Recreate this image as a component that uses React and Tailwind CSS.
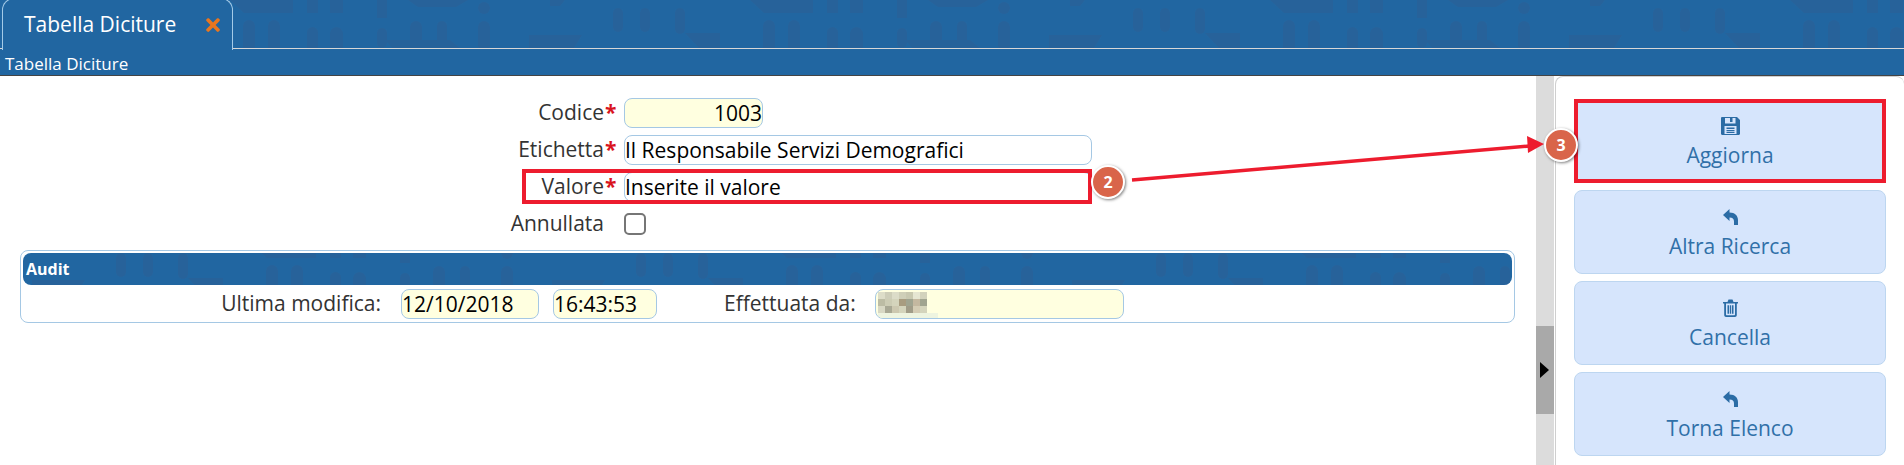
import { FaTimes } from "react-icons/fa";

const font = "font-['Open_Sans',sans-serif]";

const mosaic = [
  "bg-[#ddddc8]", "bg-[#cdcdb8]", "bg-[#dcdcc8]", "bg-[#cfcfb8]", "bg-[#c8c8b0]", "bg-[#e6e6d2]", "bg-[#d2d2bc]",
  "bg-[#bcbca4]", "bg-[#ccccb4]", "bg-[#d4d4bc]", "bg-[#a89c80]", "bg-[#a0a490]", "bg-[#c4b8a0]", "bg-[#a0a490]",
  "bg-[#d8d8c4]", "bg-[#a8a894]", "bg-[#ccc8b0]", "bg-[#d4d4bc]", "bg-[#a09c88]", "bg-[#d4ccb4]", "bg-[#d4d4bc]",
];

function Arch({ x, y, w, h }) {
  return <rect x={x} y={y} width={w} height={h} rx={w / 2} />;
}

// faint repeating building pattern behind the blue bars
function Pattern({ id, dy = 0 }) {
  return (
    <svg className="absolute inset-0 w-full h-full" aria-hidden="true">
      <defs>
        <pattern id={id} x="-18" y={dy} width="520" height="48" patternUnits="userSpaceOnUse">
          <g fill="#2a5f95" opacity="0.6">
            <path d="M248 0H311V13H262Z" />
            <Arch x={261} y={20} w={12} h={34} />
            <Arch x={286} y={20} w={12} h={34} />
            <rect x={325} y={0} width={11} height={13} />
            <rect x={348} y={0} width={13} height={13} />
            <Arch x={325} y={27} w={11} h={28} />
            <Arch x={348} y={27} w={13} h={28} />
            <rect x={395} y={0} width={10} height={18} />
            <Arch x={395} y={28} w={10} h={20} />
            <path d="M426 0H486L474 7H436Z" />
            <Arch x={428} y={21} w={12} h={24} />
            <Arch x={455} y={21} w={10} h={24} />
            <path d="M410 48L403 40H468L478 48Z" />
            <circle cx={502} cy={8} r={6} />
            <Arch x={496} y={21} w={12} h={30} />
            <path d="M27 35H80L72 48H27Z" />
            <path d="M48 0H63L58 6H48Z" />
            <Arch x={111} y={8} w={10} h={24} />
            <Arch x={138} y={8} w={10} h={24} />
            <Arch x={173} y={8} w={10} h={26} />
            <path d="M183 33H218V48H197Z" />
          </g>
        </pattern>
      </defs>
      <rect width="100%" height="100%" fill={`url(#${id})`} />
    </svg>
  );
}

function SaveIcon() {
  return (
    <svg width="19" height="18" viewBox="0 0 19 18" fill="#2b6ca5" aria-hidden="true">
      <path d="M0 1.2C0 .5.5 0 1.2 0H16L19 3V16.8C19 17.5 18.5 18 17.8 18H1.2C.5 18 0 17.5 0 16.8ZM4 1V6.5H14.5V1H11.5V5H9V1ZM3.5 9V17H15.5V9ZM5.5 10.5H13.5V12H5.5ZM5.5 13H13.5V14.2H5.5ZM5.5 15H13.5V16H5.5Z" fillRule="evenodd" />
    </svg>
  );
}

function ReplyIcon() {
  return (
    <svg width="15" height="16" viewBox="0 0 15 16" fill="#2b6ca5" aria-hidden="true">
      <path d="M0 6L6.5 0V3.5C12 3.5 15 7 15 11V16H11V12.5C11 10 9.5 8.5 6.5 8.5V12Z" />
    </svg>
  );
}

function TrashIcon() {
  return (
    <svg width="15" height="18" viewBox="0 0 15 18" fill="#2b6ca5" aria-hidden="true">
      <path d="M0 3H4.5L5.5 .5H9.5L10.5 3H15V4.6H13.8V16C13.8 17.2 13 18 12 18H3C2 18 1.2 17.2 1.2 16V4.6H0ZM3 4.6V15.6C3 16 3.2 16.3 3.6 16.3H11.4C11.8 16.3 12 16 12 15.6V4.6ZM4.5 6.2H6V14.8H4.5ZM6.8 6.2H8.2V14.8H6.8ZM9 6.2H10.5V14.8H9Z" fillRule="evenodd" />
    </svg>
  );
}

function ActionButton({ icon, label, marked }) {
  return (
    <button
      className={`h-[84px] flex flex-col items-center justify-center gap-[7px] pt-[4px] rounded-lg bg-[#d6e5fc] text-[21px] leading-[27px] text-[#3070a8] ${
        marked ? "rounded-none border-4 border-[#ed1c2e]" : "border border-[#bdd6f0]"
      }`}
    >
      <span className="h-[18px] flex items-center">{icon}</span>
      {label}
    </button>
  );
}

function Field({ className = "", children }) {
  return (
    <div className={`h-[30px] rounded-lg border border-[#a5c8e4] text-[21px] leading-[28px] text-black whitespace-nowrap overflow-hidden ${className}`}>
      {children}
    </div>
  );
}

function Row({ label, required, children }) {
  return (
    <div className="flex items-center h-[30px] text-[21px] text-[#333]">
      <span className="w-[604px] text-right whitespace-nowrap">{label}</span>
      <span className="w-[20px] pl-[1px] text-[#d9141e] font-bold">{required ? "*" : ""}</span>
      {children}
    </div>
  );
}

export default function App() {
  return (
    <div className={`relative h-[465px] w-[1904px] overflow-hidden flex flex-col bg-[#2166a1] ${font}`}>
      <div className="relative h-[49px] shrink-0">
        <div className="absolute left-0 top-0 right-0 h-[49px] border-b border-[#d7d7d7]">
          <Pattern id="topbar" />
        </div>
        <div className="absolute left-[2px] top-[-2px] w-[231px] h-[52px] bg-[#2166a1] rounded-t-[12px] border border-b-0 border-[#a4cbe8] flex items-center pl-[21px] text-[21px] text-white">
          Tabella Diciture
          <FaTimes className="ml-[27px] text-[#e8761f]" size={20} />
        </div>
      </div>
      <div className="h-[27px] shrink-0 border-b border-[#444] pl-[5px] text-[17px] leading-[30px] text-white">
        Tabella Diciture
      </div>

      <div className="flex-1 flex bg-white">
        <div className="w-[1536px] rounded-t-lg bg-white pt-[22px] px-[20px]">
          <div className="flex flex-col gap-[7px] -ml-[20px]">
            <Row label="Codice" required>
              <Field className="w-[139px] bg-[#ffffe0] text-right">1003</Field>
            </Row>
            <Row label="Etichetta" required>
              <Field className="w-[468px]">Il Responsabile Servizi Demografici</Field>
            </Row>
            <Row label="Valore" required>
              <Field className="w-[468px]">Inserite il valore</Field>
            </Row>
            <Row label="Annullata">
              <span className="w-[22px] h-[22px] rounded-[5px] border-2 border-[#767676] bg-white" />
            </Row>
          </div>

          <div className="mt-[11px] w-[1495px] h-[73px] rounded-lg border border-[#a5c8e4] p-[2px]">
            <div className="relative h-[32px] rounded-lg bg-[#2166a1] overflow-hidden">
              <Pattern id="auditbar" dy={-8} />
              <span className="relative pl-[3px] text-[16px] leading-[32px] font-bold text-white">Audit</span>
            </div>
            <div className="flex items-center mt-[4px] h-[30px] text-[21px] text-[#333]">
              <span className="w-[358px] text-right whitespace-nowrap">Ultima modifica:</span>
              <Field className="ml-[20px] w-[138px] bg-[#ffffe0]">12/10/2018</Field>
              <Field className="ml-[14px] w-[104px] bg-[#ffffe0]">16:43:53</Field>
              <span className="ml-[67px] w-[132px] whitespace-nowrap">Effettuata da:</span>
              <Field className="ml-[19px] w-[249px] bg-[#ffffe0] pl-[2px] pt-[2px]">
                <div className="grid grid-cols-[repeat(7,7px)] auto-rows-[7px] w-[49px]">
                  {mosaic.map((c, i) => (
                    <div key={i} className={c} />
                  ))}
                </div>
                <div className="h-[5px] w-[60px] bg-[#eef4e0]" />
              </Field>
            </div>
          </div>
        </div>

        <div className="relative w-[18px] bg-[#dcdcdc]">
          <div className="absolute left-0 top-[250px] w-[18px] h-[88px] bg-[#a9a9a9] flex items-center pl-[4px]">
            <span className="w-0 h-0 border-y-[8px] border-y-transparent border-l-[9px] border-l-black" />
          </div>
        </div>

        <div className="ml-[1px] flex-1 rounded-tr-lg rounded-tl-lg border-l border-t border-[#cfcfcf] pt-[22px] pl-[18px] pr-[18px]">
          <div className="flex flex-col gap-[7px]">
            <ActionButton icon={<SaveIcon />} label="Aggiorna" marked />
            <ActionButton icon={<ReplyIcon />} label="Altra Ricerca" />
            <ActionButton icon={<TrashIcon />} label="Cancella" />
            <ActionButton icon={<ReplyIcon />} label="Torna Elenco" />
          </div>
        </div>
      </div>

      {/* annotations drawn over the screen */}
      <div className="absolute left-[522px] top-[169px] w-[570px] h-[35px] border-4 border-[#ed1c2e]" />
      <svg className="absolute left-0 top-0 w-[1904px] h-[465px] pointer-events-none" aria-hidden="true">
        <line x1="1132" y1="180" x2="1530" y2="146" stroke="#ed1c2e" strokeWidth="3.5" />
        <path d="M1544 144L1527 136L1528 153Z" fill="#ed1c2e" />
      </svg>
      <div className="absolute left-[1091px] top-[165px] w-[34px] h-[34px] rounded-full bg-[#d9654a] border-2 border-white shadow-[1px_1px_3px_rgba(0,0,0,0.5)] flex items-center justify-center text-[16px] font-bold text-white">
        2
      </div>
      <div className="absolute left-[1544px] top-[128px] w-[34px] h-[34px] rounded-full bg-[#d9654a] border-2 border-white shadow-[1px_1px_3px_rgba(0,0,0,0.5)] flex items-center justify-center text-[16px] font-bold text-white">
        3
      </div>
    </div>
  );
}
